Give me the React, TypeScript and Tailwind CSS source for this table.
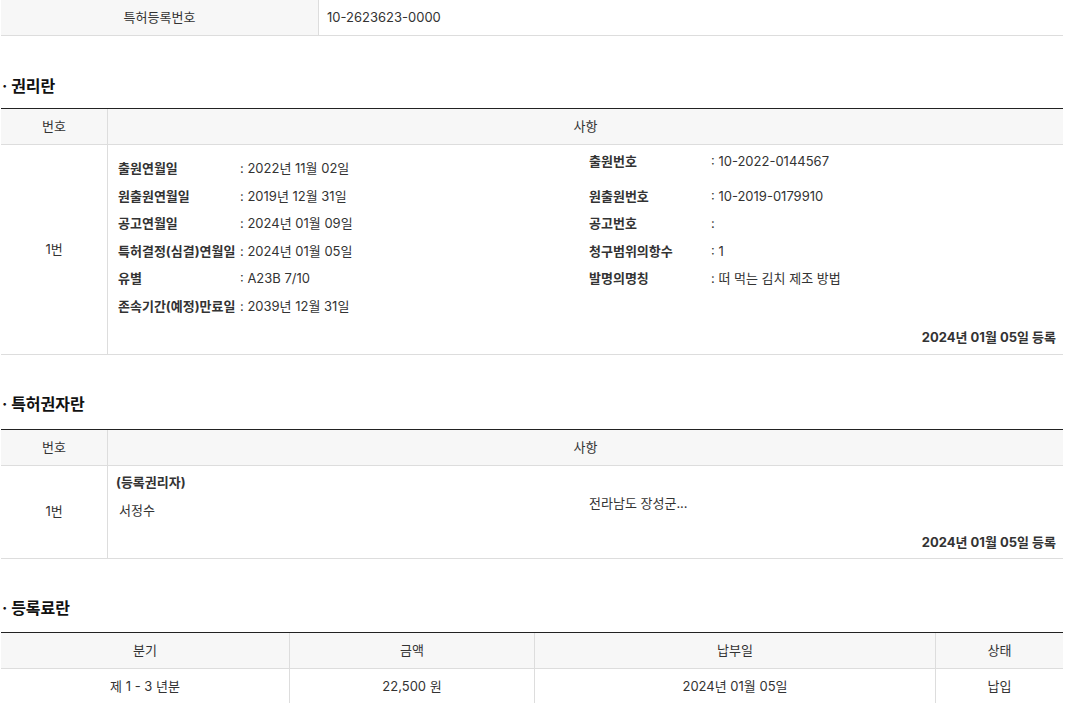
import React from 'react';

const font = "font-['Inter','Noto_Sans_CJK_KR',sans-serif]";

const leftRows = [
  { label: '출원연월일', value: ': 2022년 11월 02일' },
  { label: '원출원연월일', value: ': 2019년 12월 31일' },
  { label: '공고연월일', value: ': 2024년 01월 09일' },
  { label: '특허결정(심결)연월일', value: ': 2024년 01월 05일' },
  { label: '유별', value: ': A23B 7/10' },
  { label: '존속기간(예정)만료일', value: ': 2039년 12월 31일' },
];

const rightRows = [
  { label: '출원번호', value: ': 10-2022-0144567' },
  { label: '원출원번호', value: ': 10-2019-0179910' },
  { label: '공고번호', value: ':' },
  { label: '청구범위의항수', value: ': 1' },
  { label: '발명의명칭', value: ': 떠 먹는 김치 제조 방법' },
];

const fees = [{ term: '제 1 - 3 년분', amount: '22,500 원', date: '2024년 01월 05일', status: '납입' }];

const Heading = ({ children, className }: { children: React.ReactNode; className: string }) => (
  <h3 className={`h-[24px] leading-[24px] text-[16px] font-bold text-[#111] pl-[1px] ${className}`}>
    · {children}
  </h3>
);

const InfoRow = ({ label, value, className = '' }: { label: string; value: string; className?: string }) => (
  <div className={`flex h-[27.5px] items-center ${className}`}>
    <span className="w-[122px] shrink-0 font-bold">{label}</span>
    <span>{value}</span>
  </div>
);

const Registered = () => (
  <div className="h-[20px] leading-[20px] pr-[7px] text-right font-bold">2024년 01월 05일 등록</div>
);

const TableHead = () => (
  <div className="flex h-[37px] border-t border-t-[#222] border-b border-b-[#ddd] bg-[#f7f7f7]">
    <div className="flex w-[107px] shrink-0 items-center justify-center border-r border-r-[#ddd]">번호</div>
    <div className="flex flex-1 items-center justify-center">사항</div>
  </div>
);

export default function App() {
  return (
    <div className={`${font} w-[1063px] pl-[1px] text-[13px] text-[#333] bg-white`}>
      {/* 등록번호 */}
      <div className="flex h-[36px] border-b border-b-[#ddd]">
        <div className="flex w-[318px] shrink-0 items-center justify-center border-r border-r-[#ddd] bg-[#f7f7f7]">
          특허등록번호
        </div>
        <div className="flex items-center pl-[8px]">10-2623623-0000</div>
      </div>

      {/* 권리란 */}
      <Heading className="mt-[38px] mb-[10px]">권리란</Heading>
      <TableHead />
      <div className="flex border-b border-b-[#ddd]">
        <div className="flex w-[107px] shrink-0 items-center justify-center border-r border-r-[#ddd]">1번</div>
        <div className="flex-1 pl-[10px]">
          <div className="grid grid-cols-[471px_1fr]">
            <div className="pt-[10px]">
              {leftRows.map((r) => (
                <InfoRow key={r.label} label={r.label} value={r.value} />
              ))}
            </div>
            <div className="pt-[3px]">
              {rightRows.map((r, i) => (
                <InfoRow key={r.label} label={r.label} value={r.value} className={i === 0 ? 'h-[34.5px] !items-start pt-[4px]' : ''} />
              ))}
            </div>
          </div>
          <div className="mt-[7px] mb-[7px]">
            <Registered />
          </div>
        </div>
      </div>

      {/* 특허권자란 */}
      <Heading className="mt-[37px] mb-[13px]">특허권자란</Heading>
      <TableHead />
      <div className="flex border-b border-b-[#ddd]">
        <div className="flex w-[107px] shrink-0 items-center justify-center border-r border-r-[#ddd]">1번</div>
        <div className="flex-1 pl-[8px]">
          <div className="grid grid-cols-[473px_1fr]">
            <div className="pt-[6px]">
              <div className="h-[20px] leading-[20px] font-bold">(등록권리자)</div>
              <div className="mt-[8px] h-[20px] leading-[20px] pl-[3px]">서정수</div>
            </div>
            <div className="pt-[27px] h-[20px] leading-[20px]">전라남도 장성군...</div>
          </div>
          <div className="mt-[12px] mb-[6px]">
            <Registered />
          </div>
        </div>
      </div>

      {/* 등록료란 */}
      <Heading className="mt-[37px] mb-[12px]">등록료란</Heading>
      <div className="border-t border-t-[#222]">
        <div className="grid grid-cols-[289px_245px_401px_1fr] h-[36px] bg-[#f7f7f7] border-b border-b-[#ddd]">
          <div className="flex items-center justify-center border-r border-r-[#ddd]">분기</div>
          <div className="flex items-center justify-center border-r border-r-[#ddd]">금액</div>
          <div className="flex items-center justify-center border-r border-r-[#ddd]">납부일</div>
          <div className="flex items-center justify-center">상태</div>
        </div>
        {fees.map((f) => (
          <div key={f.term} className="grid grid-cols-[289px_245px_401px_1fr] h-[36px] border-b border-b-[#ddd]">
            <div className="flex items-center justify-center border-r border-r-[#ddd]">{f.term}</div>
            <div className="flex items-center justify-center border-r border-r-[#ddd]">{f.amount}</div>
            <div className="flex items-center justify-center border-r border-r-[#ddd]">{f.date}</div>
            <div className="flex items-center justify-center">{f.status}</div>
          </div>
        ))}
      </div>
    </div>
  );
}
